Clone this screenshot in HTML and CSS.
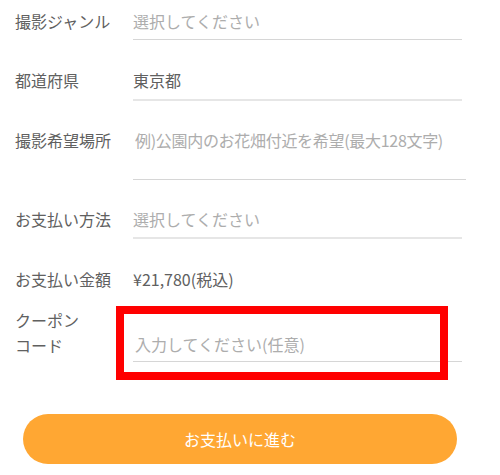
FILE: index.html
```html
<!DOCTYPE html>
<html lang="ja">
<head>
<meta charset="utf-8">
<link rel="stylesheet" href="styles.css">
</head>
<body>
<form class="form">
  <div class="row r1">
    <div class="label">撮影ジャンル</div>
    <div class="field select"><span class="ph">選択してください</span></div>
  </div>
  <div class="row r2">
    <div class="label">都道府県</div>
    <div class="field select thick"><span class="val">東京都</span></div>
  </div>
  <div class="row r3">
    <div class="label">撮影希望場所</div>
    <div class="field area"><span class="ph tight">例)公園内のお花畑付近を希望(最大128文字)</span></div>
  </div>
  <div class="row r4">
    <div class="label">お支払い方法</div>
    <div class="field select thick"><span class="ph">選択してください</span></div>
  </div>
  <div class="row r5">
    <div class="label">お支払い金額</div>
    <div class="field plain"><span class="val">¥21,780(税込)</span></div>
  </div>
  <div class="row r6">
    <div class="label two">クーポン<br>コード</div>
    <div class="field coupon"><span class="ph">入力してください(任意)</span><span class="highlight"></span></div>
  </div>
  <div class="actions">
    <button type="button" class="btn">お支払いに進む</button>
  </div>
</form>
</body>
</html>
```
FILE: styles.css
```css
* { box-sizing: border-box; }
html, body { margin: 0; padding: 0; background: #fff; }
body {
  font-family: "Noto Sans CJK JP", "Noto Sans", sans-serif;
  font-size: 16px;
  color: #606060;
}
.form { padding: 0 38px 0 15px; width: 500px; }
.row {
  display: grid;
  grid-template-columns: 118px 1fr;
  align-items: start;
}
.label {
  line-height: 24px;
  padding-top: 9px;
  color: #606060;
  white-space: nowrap;
}
.field {
  line-height: 24px;
  padding: 9px 0 6px 0;
  border-bottom: 1px solid #d6d6d6;
  white-space: nowrap;
  position: relative;
}
.field.thick { border-bottom: 2px solid #e6e6e6; padding-bottom: 7px; }
.ph { color: #adadad; }
.ph.tight { letter-spacing: -0.3px; }
.val { color: #606060; }
.r2 { margin-top: 19px; }
.r3 { margin-top: 18px; }
.r3 .field { padding-bottom: 27px; margin-right: -4px; padding-left: 2px; }
.r4 { margin-top: 18px; }
.r4 .field.thick { padding-bottom: 6px; }
.r5 { margin-top: 19px; }
.field.plain { border-bottom: none; }
.r6 { margin-top: 9px; }
.label.two { line-height: 25px; padding-top: 2px; }
.field.coupon { padding-top: 26px; padding-bottom: 5px; padding-left: 2px; }
.highlight {
  position: absolute;
  left: -17px;
  right: 14px;
  top: 0px;
  height: 74px;
  border: 8px solid #ff0000;
  pointer-events: none;
}
.actions {
  display: flex;
  margin-top: 52px;
  padding-left: 8px;
  padding-right: 5px;
}
.btn {
  flex: 1;
  height: 50px;
  border: none;
  border-radius: 25px;
  background: #ffa733;
  color: #fff;
  font-family: "Noto Sans CJK JP", "Noto Sans", sans-serif;
  font-size: 16px;
  cursor: pointer;
}
```
